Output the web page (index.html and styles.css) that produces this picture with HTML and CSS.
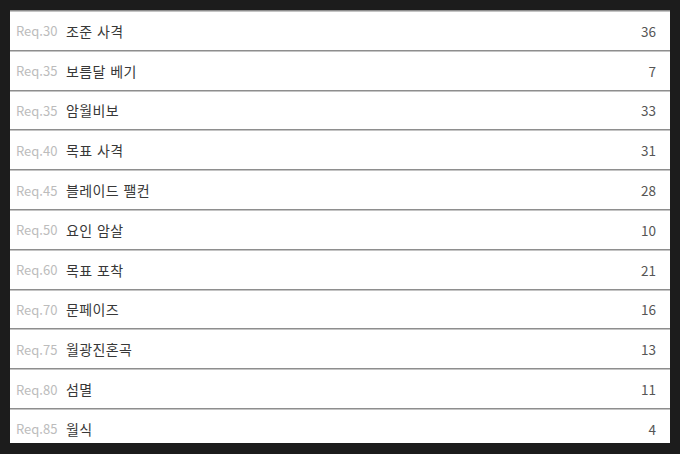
FILE: index.html
```html
<!DOCTYPE html>
<html lang="ko">
<head>
<meta charset="utf-8">
<link rel="stylesheet" href="styles.css">
</head>
<body>
<div class="frame">
  <ul class="list">
    <li class="row"><span class="req">Req.30</span><span class="name">조준 사격</span><span class="count">36</span></li>
    <li class="row"><span class="req">Req.35</span><span class="name">보름달 베기</span><span class="count">7</span></li>
    <li class="row"><span class="req">Req.35</span><span class="name">암월비보</span><span class="count">33</span></li>
    <li class="row"><span class="req">Req.40</span><span class="name">목표 사격</span><span class="count">31</span></li>
    <li class="row"><span class="req">Req.45</span><span class="name">블레이드 팰컨</span><span class="count">28</span></li>
    <li class="row"><span class="req">Req.50</span><span class="name">요인 암살</span><span class="count">10</span></li>
    <li class="row"><span class="req">Req.60</span><span class="name">목표 포착</span><span class="count">21</span></li>
    <li class="row"><span class="req">Req.70</span><span class="name">문페이즈</span><span class="count">16</span></li>
    <li class="row"><span class="req">Req.75</span><span class="name">월광진혼곡</span><span class="count">13</span></li>
    <li class="row"><span class="req">Req.80</span><span class="name">섬멸</span><span class="count">11</span></li>
    <li class="row"><span class="req">Req.85</span><span class="name">월식</span><span class="count">4</span></li>
  </ul>
</div>
</body>
</html>
```
FILE: styles.css
```css
html, body {
  margin: 0;
  padding: 0;
  background: #1c1c1c;
}
body {
  width: 680px;
  height: 454px;
  overflow: hidden;
  font-family: "Noto Sans CJK KR", "Noto Sans", sans-serif;
}
.frame {
  padding: 10px 10px 0 10px;
}
.list {
  list-style: none;
  margin: 0;
  padding: 0;
  width: 660px;
  height: 433px;
  overflow: hidden;
  background: #fff;
}
.row {
  display: flex;
  align-items: center;
  height: 37.8px;
  border-top: 1px solid #8e8e8e;
  box-shadow: inset 0 1px 0 #c4c4c4;
  padding: 1px 14px 0 6px;
  font-size: 13px;
}
.req {
  color: #bcbcbc;
  width: 50px;
  flex: none;
}
.name {
  color: #383838;
  flex: 1;
  font-size: 14px;
  letter-spacing: 0.4px;
}
.count {
  color: #555;
  font-size: 13.5px;
}
```
